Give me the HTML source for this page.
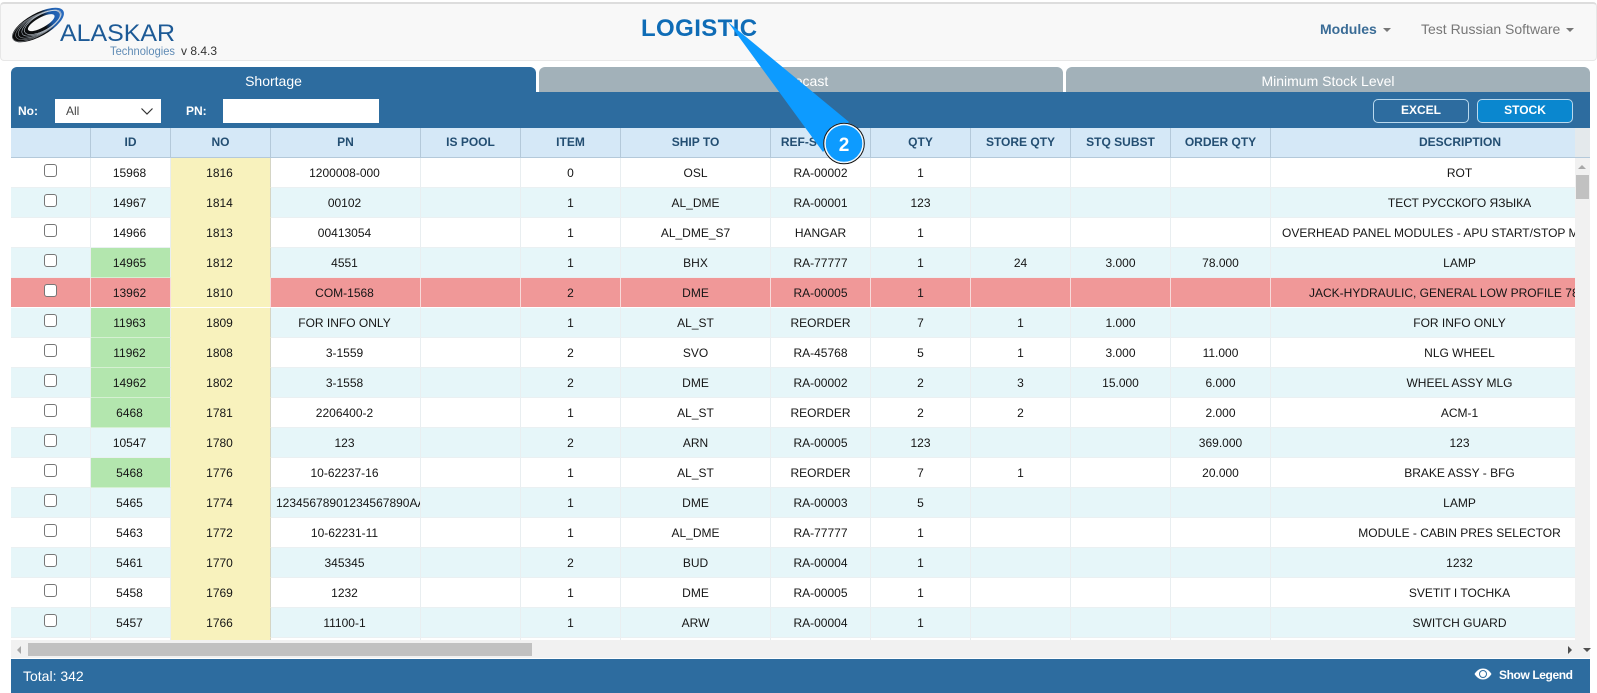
<!DOCTYPE html>
<html><head><meta charset="utf-8"><title>Logistic</title>
<style>
html,body{margin:0;padding:0;width:1597px;height:693px;overflow:hidden;background:#fff;font-family:"Liberation Sans",sans-serif}
.abs,.abs *{box-sizing:border-box}
.abs{position:absolute}
#nav{left:0;top:2px;width:1597px;height:59px;background:#f8f8f8;border:1px solid #e7e7e7;border-top:2px solid #ddd;border-radius:4px}
#title{left:641px;top:15px;font-size:24px;font-weight:bold;color:#0f6cb6;line-height:28px;letter-spacing:.4px}
.navt{top:21px;font-size:14px;line-height:17px}
.caret{position:absolute;width:0;height:0;border-left:4px solid transparent;border-right:4px solid transparent;border-top:4px solid #777;top:28px}
.tab{top:67px;height:25px;text-align:center;color:#fff;font-size:14px;line-height:28px}
#t1{left:11px;width:525px;background:#2d6c9f;border-radius:6px 6px 0 0}
#t2{left:539px;width:524px;background:#a2b1b9;border-radius:6px 6px 0 0}
#t3{left:1066px;width:524px;background:#a2b1b9;border-radius:6px 6px 0 0}
#bar{left:11px;top:92px;width:1579px;height:36px;background:#2d6c9f}
.lbl{top:104px;font-size:12px;font-weight:bold;color:#fff;line-height:14px}
#sel{left:55px;top:99px;width:106px;height:24px;background:#fff;font-size:12px;color:#444;line-height:24px;padding-left:11px}
#pn{left:223px;top:99px;width:156px;height:24px;background:#fff}
.btn{top:99px;width:96px;height:24px;border:1px solid #b9d9ee;border-radius:5px;color:#fff;font-size:12px;font-weight:bold;text-align:center;line-height:20px}
#hd{left:11px;top:128px;width:1579px;height:30px;background:#d5e8f7;border-bottom:1px solid #b4c9da;overflow:hidden}
#hd div{position:absolute;top:0;height:29px;border-right:1px solid #b4c9da;text-align:center;font-size:12px;font-weight:bold;color:#234e72;line-height:29px;white-space:nowrap}
#gridwrap{left:11px;top:158px;width:1564px;height:482px;overflow:hidden;background:#fff}
table{border-collapse:separate;border-spacing:0;table-layout:fixed;width:1638px;font-size:12px;color:#151515}
td{height:30px;padding:1px 0 0;border-right:1px solid #e9eef0;border-bottom:1px solid #eaf0f2;text-align:center;white-space:nowrap;overflow:hidden;line-height:27px}
td:nth-child(2),td:nth-child(3),td:nth-child(4){padding-right:2px}
tr:nth-child(even) td{background:#e6f6f9}
tr:nth-child(odd) td{background:#fff}
tr td.g{background:#b3e6ae;border-bottom-color:#d5f0d2}
tr td.y{background:#f8f2bd;border-bottom-color:#f8f2bd;border-right-color:#d5d5c5}
tr.r td{background:#f09898;border-right-color:#f8dada;border-bottom-color:#fff}
tr.r td.y{background:#f8f2bd}
tr.r td.p{background:#f09898}
td.d{padding-left:13px;padding-right:13px}
.cb{display:inline-block;width:13px;height:13px;background:#fff;border:1px solid #767676;border-radius:3px;box-sizing:border-box;position:relative;top:-1px;vertical-align:middle;margin-top:-4px}
#vs{left:1575px;top:158px;width:15px;height:500px;background:#f1f1f1}
#vthumb{left:1576px;top:175px;width:13px;height:24px;background:#c1c1c1}
#hs{left:11px;top:640px;width:1564px;height:18px;background:#f1f1f1}
#hthumb{left:28px;top:643px;width:504px;height:13px;background:#c1c1c1}
.ar{position:absolute;width:0;height:0}
#foot{left:11px;top:659px;width:1579px;height:34px;background:#2d6c9f;color:#fff}
</style></head><body>
<div class="abs" id="nav"></div>
<svg class="abs" style="left:0;top:0" width="240" height="62" viewBox="0 0 240 62">
<defs><linearGradient id="lg" gradientUnits="userSpaceOnUse" x1="12" y1="22" x2="66" y2="30"><stop offset="0" stop-color="#0c0c0c"/><stop offset=".6" stop-color="#0c0f12"/><stop offset=".75" stop-color="#1c5aa8"/><stop offset="1" stop-color="#2a6cc0"/></linearGradient></defs>
<g transform="rotate(-29 38 25)" fill="none">
<ellipse cx="38" cy="25" rx="29" ry="11.500" fill="url(#lg)"/>
<ellipse cx="36" cy="25" rx="26.500" ry="10" stroke="#8d939a" stroke-width=".5"/>
<ellipse cx="38" cy="25" rx="25" ry="9.500" stroke="#8d939a" stroke-width=".5"/>
<ellipse cx="40" cy="25" rx="24" ry="9" stroke="#a5aeb8" stroke-width=".5"/>
<ellipse cx="42" cy="25" rx="22" ry="8.500" stroke="#c5d0dc" stroke-width=".5"/>
<ellipse cx="43" cy="25" rx="20" ry="8" stroke="#dde6f0" stroke-width=".5"/>
<ellipse cx="42" cy="24.500" rx="15" ry="5" fill="#f8f8f8"/>
</g>
<text x="60" y="41" font-family="Liberation Sans" font-size="24" fill="#1d5a96" textLength="115" lengthAdjust="spacingAndGlyphs">ALASKAR</text>
<text x="110" y="55" font-family="Liberation Sans" font-size="12" fill="#5f8bb5" textLength="65" lengthAdjust="spacingAndGlyphs">Technologies</text>
<text x="181" y="55" font-family="Liberation Sans" font-size="12" fill="#333">v 8.4.3</text>
</svg>
<div class="abs" id="title">LOGISTIC</div>
<div class="abs navt" style="left:1320px;font-weight:bold;color:#3a6c96">Modules</div>
<div class="caret" style="left:1383px"></div>
<div class="abs navt" style="left:1421px;color:#777">Test Russian Software</div>
<div class="caret" style="left:1566px"></div>

<div class="abs tab" id="t1">Shortage</div>
<div class="abs tab" id="t2">Forecast</div>
<div class="abs tab" id="t3">Minimum Stock Level</div>
<div class="abs" id="bar"></div>
<div class="abs lbl" style="left:18px">No:</div>
<div class="abs" id="sel">All</div>
<svg class="abs" style="left:140px;top:107px" width="14" height="9"><path d="M1.5 1.5L7 7L12.5 1.5" fill="none" stroke="#333" stroke-width="1.2"/></svg>
<div class="abs lbl" style="left:186px">PN:</div>
<div class="abs" id="pn"></div>
<div class="abs btn" style="left:1373px">EXCEL</div>
<div class="abs btn" style="left:1477px;background:#0a87cf">STOCK</div>

<div class="abs" id="hd">
<div style="left:0;width:80px"></div>
<div style="left:80px;width:80px">ID</div>
<div style="left:160px;width:100px">NO</div>
<div style="left:260px;width:150px">PN</div>
<div style="left:410px;width:100px">IS POOL</div>
<div style="left:510px;width:100px">ITEM</div>
<div style="left:610px;width:150px">SHIP TO</div>
<div style="left:760px;width:100px">REF-SOURCE</div>
<div style="left:860px;width:100px">QTY</div>
<div style="left:960px;width:100px">STORE QTY</div>
<div style="left:1060px;width:100px">STQ SUBST</div>
<div style="left:1160px;width:100px">ORDER QTY</div>
<div style="left:1260px;width:305px;text-indent:74px;overflow:hidden">DESCRIPTION</div>
</div>

<div class="abs" id="gridwrap">
<table><colgroup><col style="width:80px"><col style="width:80px"><col style="width:100px"><col style="width:150px"><col style="width:100px"><col style="width:100px"><col style="width:150px"><col style="width:100px"><col style="width:100px"><col style="width:100px"><col style="width:100px"><col style="width:100px"><col style="width:378px"></colgroup>
<tbody>
<tr><td><span class="cb"></span></td><td>15968</td><td class="y">1816</td><td class="p">1200008-000</td><td></td><td>0</td><td>OSL</td><td>RA-00002</td><td>1</td><td></td><td></td><td></td><td class="d">ROT</td></tr>
<tr><td><span class="cb"></span></td><td>14967</td><td class="y">1814</td><td class="p">00102</td><td></td><td>1</td><td>AL_DME</td><td>RA-00001</td><td>123</td><td></td><td></td><td></td><td class="d">ТЕСТ РУССКОГО ЯЗЫКА</td></tr>
<tr><td><span class="cb"></span></td><td>14966</td><td class="y">1813</td><td class="p">00413054</td><td></td><td>1</td><td>AL_DME_S7</td><td>HANGAR</td><td>1</td><td></td><td></td><td></td><td class="d" style="text-align:left;padding-left:11px">OVERHEAD PANEL MODULES - APU START/STOP MODULE</td></tr>
<tr><td><span class="cb"></span></td><td class="g">14965</td><td class="y">1812</td><td class="p">4551</td><td></td><td>1</td><td>BHX</td><td>RA-77777</td><td>1</td><td>24</td><td>3.000</td><td>78.000</td><td class="d">LAMP</td></tr>
<tr class="r"><td><span class="cb"></span></td><td>13962</td><td class="y">1810</td><td class="p">COM-1568</td><td></td><td>2</td><td>DME</td><td>RA-00005</td><td>1</td><td></td><td></td><td></td><td class="d" style="text-align:left;padding-left:38px">JACK-HYDRAULIC, GENERAL LOW PROFILE 78 TON</td></tr>
<tr><td><span class="cb"></span></td><td class="g">11963</td><td class="y">1809</td><td class="p">FOR INFO ONLY</td><td></td><td>1</td><td>AL_ST</td><td>REORDER</td><td>7</td><td>1</td><td>1.000</td><td></td><td class="d">FOR INFO ONLY</td></tr>
<tr><td><span class="cb"></span></td><td class="g">11962</td><td class="y">1808</td><td class="p">3-1559</td><td></td><td>2</td><td>SVO</td><td>RA-45768</td><td>5</td><td>1</td><td>3.000</td><td>11.000</td><td class="d">NLG WHEEL</td></tr>
<tr><td><span class="cb"></span></td><td class="g">14962</td><td class="y">1802</td><td class="p">3-1558</td><td></td><td>2</td><td>DME</td><td>RA-00002</td><td>2</td><td>3</td><td>15.000</td><td>6.000</td><td class="d">WHEEL ASSY MLG</td></tr>
<tr><td><span class="cb"></span></td><td class="g">6468</td><td class="y">1781</td><td class="p">2206400-2</td><td></td><td>1</td><td>AL_ST</td><td>REORDER</td><td>2</td><td>2</td><td></td><td>2.000</td><td class="d">ACM-1</td></tr>
<tr><td><span class="cb"></span></td><td>10547</td><td class="y">1780</td><td class="p">123</td><td></td><td>2</td><td>ARN</td><td>RA-00005</td><td>123</td><td></td><td></td><td>369.000</td><td class="d">123</td></tr>
<tr><td><span class="cb"></span></td><td class="g">5468</td><td class="y">1776</td><td class="p">10-62237-16</td><td></td><td>1</td><td>AL_ST</td><td>REORDER</td><td>7</td><td>1</td><td></td><td>20.000</td><td class="d">BRAKE ASSY - BFG</td></tr>
<tr><td><span class="cb"></span></td><td>5465</td><td class="y">1774</td><td class="p" style="padding-left:5px;text-align:left">12345678901234567890AAAAAAAAAA</td><td></td><td>1</td><td>DME</td><td>RA-00003</td><td>5</td><td></td><td></td><td></td><td class="d">LAMP</td></tr>
<tr><td><span class="cb"></span></td><td>5463</td><td class="y">1772</td><td class="p">10-62231-11</td><td></td><td>1</td><td>AL_DME</td><td>RA-77777</td><td>1</td><td></td><td></td><td></td><td class="d">MODULE - CABIN PRES SELECTOR</td></tr>
<tr><td><span class="cb"></span></td><td>5461</td><td class="y">1770</td><td class="p">345345</td><td></td><td>2</td><td>BUD</td><td>RA-00004</td><td>1</td><td></td><td></td><td></td><td class="d">1232</td></tr>
<tr><td><span class="cb"></span></td><td>5458</td><td class="y">1769</td><td class="p">1232</td><td></td><td>1</td><td>DME</td><td>RA-00005</td><td>1</td><td></td><td></td><td></td><td class="d">SVETIT I TOCHKA</td></tr>
<tr><td><span class="cb"></span></td><td>5457</td><td class="y">1766</td><td class="p">11100-1</td><td></td><td>1</td><td>ARW</td><td>RA-00004</td><td>1</td><td></td><td></td><td></td><td class="d">SWITCH GUARD</td></tr>
<tr><td></td><td></td><td class="y"></td><td></td><td></td><td></td><td></td><td></td><td></td><td></td><td></td><td></td><td></td></tr>
</tbody></table>
</div>

<div class="abs" id="vs"></div>
<div class="abs" style="left:1575px;top:128px;width:15px;height:30px;background:#e4e9ec;border-bottom:1px solid #b4c9da"></div>
<div class="ar" style="left:1578px;top:165px;border-left:4px solid transparent;border-right:4px solid transparent;border-bottom:4px solid #a8a8a8"></div>
<div class="abs" id="vthumb"></div>
<div class="abs" id="hs"></div>
<div class="abs" id="hthumb"></div>
<div class="ar" style="left:17px;top:646px;border-top:4px solid transparent;border-bottom:4px solid transparent;border-right:4px solid #a8a8a8"></div>
<div class="ar" style="left:1568px;top:646px;border-top:4px solid transparent;border-bottom:4px solid transparent;border-left:4px solid #505050"></div>
<div class="ar" style="left:1583px;top:648px;border-left:4px solid transparent;border-right:4px solid transparent;border-top:4px solid #505050"></div>

<div class="abs" id="foot">
<div style="position:absolute;left:12px;top:9px;font-size:14px;line-height:17px">Total: 342</div>
<svg style="position:absolute;left:1463px;top:8px" width="18" height="14" viewBox="0 0 18 14"><path d="M0.5 7C3 3 6 1.5 9 1.5S15 3 17.500 7C15 11 12 12.500 9 12.500S3 11 0.500 7Z" fill="#fff"/><circle cx="9" cy="7" r="4" fill="#2d6c9f"/><circle cx="9" cy="7" r="3" fill="#fff"/></svg>
<div style="position:absolute;left:1488px;top:9px;font-size:12px;font-weight:bold;line-height:15px;white-space:nowrap;letter-spacing:-.4px">Show Legend</div>
</div>

<svg class="abs" style="left:0;top:0" width="1597" height="693" viewBox="0 0 1597 693">
<path d="M728 22L849 122L823 152Z" fill="#0d9bff"/>
<circle cx="844" cy="143.500" r="20" fill="#0d9bff" stroke="#fff" stroke-width="1.500"/>
<circle cx="844" cy="143.500" r="20.300" fill="none" stroke="#111" stroke-width="1"/>
<circle cx="844" cy="143.500" r="18.800" fill="none" stroke="#fff" stroke-width="1"/>
<text x="844" y="151" text-anchor="middle" font-family="Liberation Sans" font-weight="bold" font-size="19" fill="#fff">2</text>
</svg>
</body></html>
